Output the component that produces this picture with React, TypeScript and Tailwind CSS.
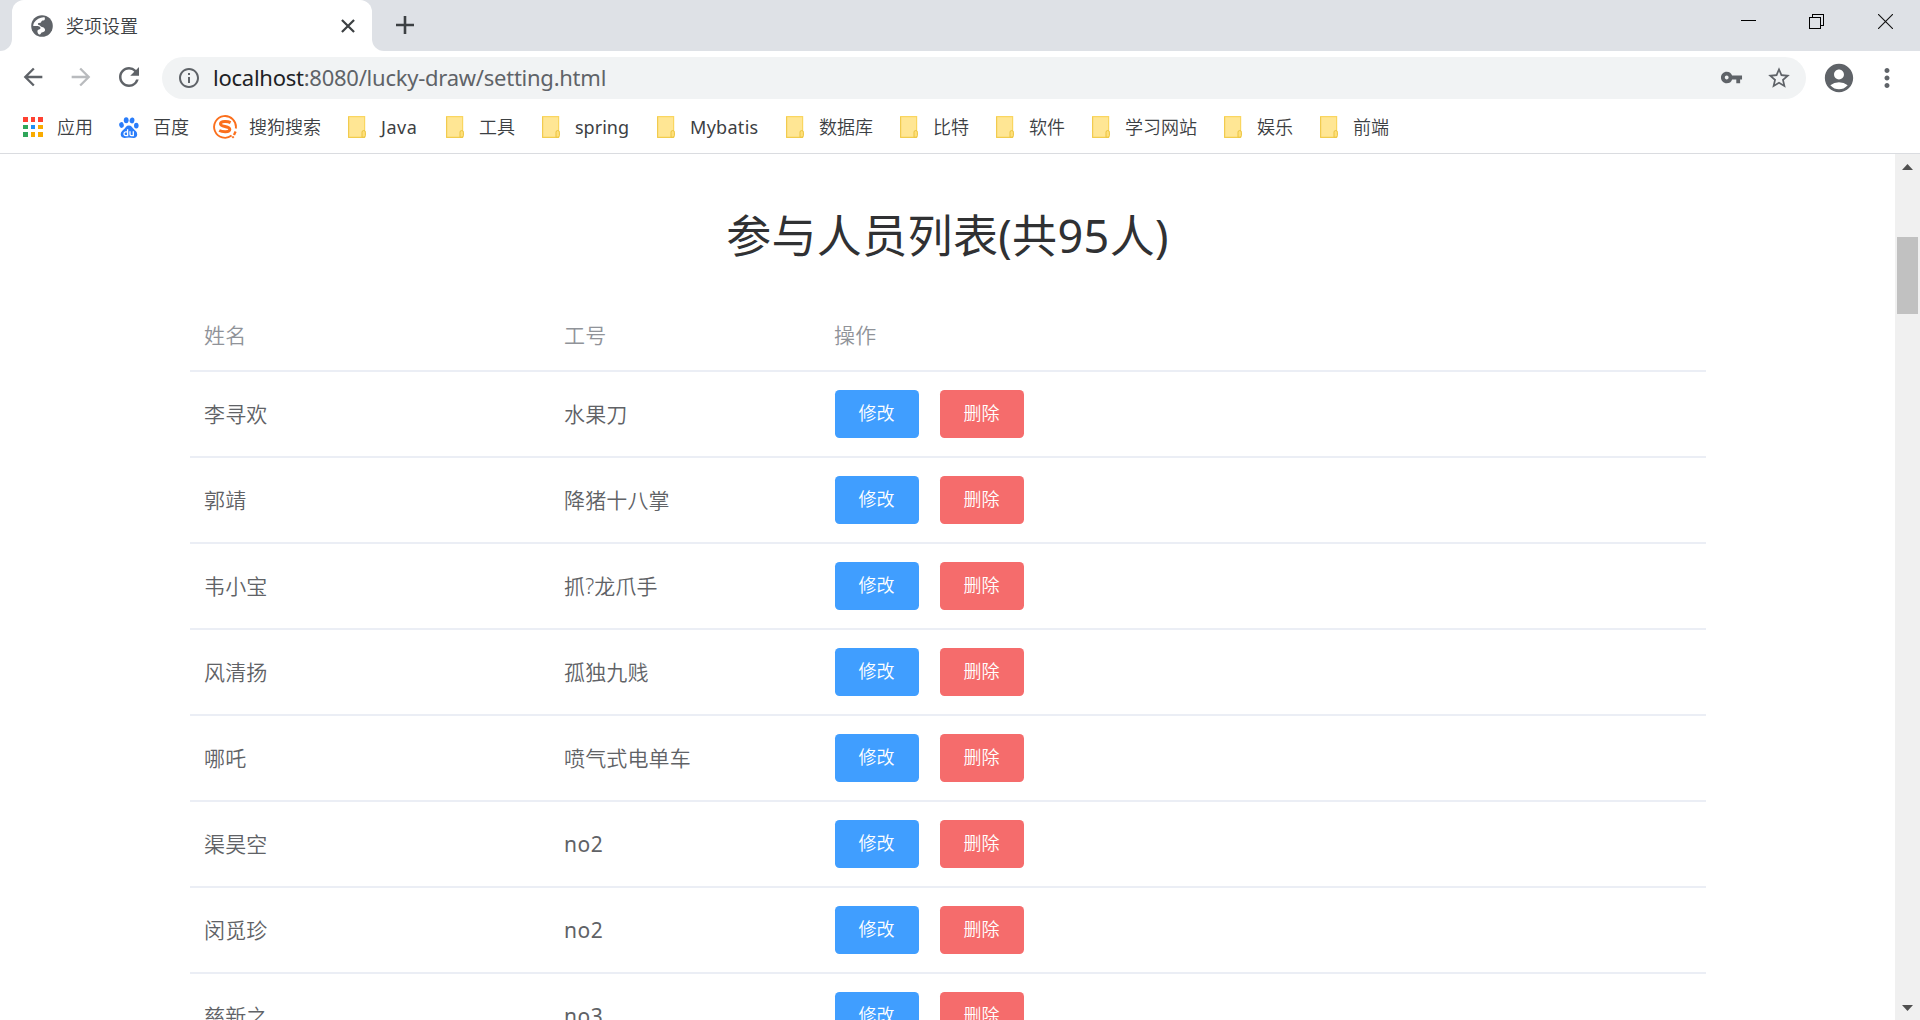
import type { ReactNode } from "react";
import { MdArrowBack, MdArrowForward, MdRefresh, MdInfoOutline, MdVpnKey, MdStarBorder, MdAccountCircle, MdMoreVert } from "react-icons/md";

const people: [string, string][] = [
  ["李寻欢", "水果刀"],
  ["郭靖", "降猪十八掌"],
  ["韦小宝", "抓?龙爪手"],
  ["风清扬", "孤独九贱"],
  ["哪吒", "喷气式电单车"],
  ["渠昊空", "no2"],
  ["闵觅珍", "no2"],
  ["慈新之", "no3"],
];

function Globe() {
  return (
    <svg viewBox="0 0 22 22" className="h-[22px] w-[22px] shrink-0">
      <circle cx="11" cy="11" r="10.8" fill="#5f6368" />
      <path
        d="M13.600 2.200C9.600 1.800 5.400 4 3 7.800c-.5 1-.8 2-.8 3.200h3.400c1.800 0 3.800.5 3.900 2 .1 1.300-1.500 1.200-2.500 1.900-.9.600-.5 2-.2 3.200.2.700.6 1.100 1.200 1.300 1.100 0 1.800-.2 2-1.200.3-1.200 2.900-.8 3.800-2.200.8-1.300-.2-2.700-1.200-3.400-.8-.6-2.300-.5-2.900-1.300-.5-.7-.9-1.300-1.900-1.400-.9-.1-1.300-.9-.6-1.600.6-.6 1.500-.2 2.300-.5.800-.3.600-1.300 1.300-1.900.8-.7 2.400-.2 2.900-1.200.3-.7.300-1.800-.1-2.500Z"
        fill="#fff"
      />
    </svg>
  );
}

function AppsIcon() {
  return (
    <svg viewBox="0 0 20 20" className="h-5 w-5">
      <path d="M0 0h5v5H0zM8 0h4v5H8zM15 0h5v5h-5z" fill="#ff4131" />
      <path d="M0 8h5v4H0zM0 15h5v5H0z" fill="#2fa65a" />
      <path d="M8 8h4v4H8z" fill="#1e8ff5" />
      <path d="M15 8h5v4h-5zM8 15h4v5H8zM15 15h5v5h-5z" fill="#f9ab00" />
    </svg>
  );
}

function BaiduIcon() {
  return (
    <svg viewBox="0 0 20 21" className="h-[21px] w-5">
      <g fill="#2a7dfa">
        <ellipse cx="2.500" cy="8" rx="2.300" ry="2.900" transform="rotate(-12 2.500 8)" />
        <ellipse cx="7.200" cy="3.200" rx="2.400" ry="3" />
        <ellipse cx="13" cy="3.400" rx="2.400" ry="3" transform="rotate(12 13 3.400)" />
        <ellipse cx="17.300" cy="8.600" rx="2.300" ry="2.900" />
        <path d="M9.900 8.400c2.600 0 3.400 2.200 4.800 3.700 1.500 1.600 3.500 2.700 3.500 5.300 0 2.400-1.700 3.600-3.700 3.500-1.700 0-2.900-.4-4.600-.4s-2.900.4-4.500.4c-2.100 0-3.700-1.300-3.700-3.600 0-2.600 2.100-3.600 3.500-5.200 1.300-1.500 2.100-3.700 4.700-3.700Z" />
      </g>
      <g fill="none" stroke="#fff" strokeWidth="1.300">
        <path d="M8.600 12.200v6.400H6.700q-1.700 0-1.700-1.900t1.700-1.900h1.900" />
        <path d="M11 14.200v3q0 1.400 1.300 1.400h2v-4.400" />
      </g>
    </svg>
  );
}

function SogouIcon() {
  return (
    <svg viewBox="0 0 24 24" className="h-6 w-6" fill="none" stroke="#fb6f1c">
      <path d="M18.600 20.600A10.900 10.900 0 1 1 22.800 13.500" strokeWidth="1.900" />
      <path d="M17.600 7.600c-2.600-1.300-9.800-1.900-10.100 1.200-.3 3.200 9.500 2.200 9.300 5.600-.2 3.300-7.500 2.700-10.600 1.100" strokeWidth="3" />
      <path d="M22.600 16.600 21 20" strokeWidth="2.300" />
      <circle cx="20" cy="22.200" r=".9" fill="#fb6f1c" strokeWidth=".4" />
    </svg>
  );
}

function FolderIcon() {
  return (
    <svg viewBox="0 0 18 22" className="h-[22px] w-[18px]">
      <path d="M.6.600h16v20.800H.6z" fill="#ffe694" stroke="#fad660" strokeWidth="1.200" />
      <path d="M.6 1v20.400h16" fill="none" stroke="#f0cb4e" strokeWidth="1" />
      <path d="M14 21.200v-5q0-1.700 1.700-1.700t1.700 1.700v3.400q0 1.600-1.600 1.600Z" fill="#ffe07a" stroke="#ebc440" strokeWidth="1" />
    </svg>
  );
}

type BookmarkProps = { label: string; width: string; icon?: ReactNode; iconBox?: string; labelClass?: string };

function Bookmark({ label, width, icon = <FolderIcon />, iconBox = "w-[33px]", labelClass = "" }: BookmarkProps) {
  return (
    <div className={`flex h-full shrink-0 items-center ${width}`}>
      <span className={`flex shrink-0 pb-px ${iconBox}`}>{icon}</span>
      <span className={`whitespace-nowrap ${labelClass}`}>{label}</span>
    </div>
  );
}

function TabStrip() {
  return (
    <div className="flex h-[51px] bg-[#dee1e6]">
      <div className="flex w-3 items-end bg-white">
        <div className="h-full w-full rounded-br-[12px] bg-[#dee1e6]" />
      </div>
      <div className="w-[360px] bg-[#dee1e6]">
        <div className="flex h-full items-center rounded-t-[12px] bg-white pl-[19px] pr-4">
          <Globe />
          <span className="ml-[13px] pt-[2px] text-[18px] text-[#3c4043]">奖项设置</span>
          <svg viewBox="0 0 12 12" className="ml-auto mr-px h-[14px] w-[14px]" stroke="#3c4043" strokeWidth="1.900">
            <path d="m.8.800 10.400 10.400M11.200.8.800 11.200" />
          </svg>
        </div>
      </div>
      <div className="w-3 bg-white">
        <div className="h-full rounded-bl-[12px] bg-[#dee1e6]" />
      </div>
      <svg viewBox="0 0 18 18" className="ml-3 mt-4 h-[18px] w-[18px]" stroke="#3c4043" strokeWidth="2.600">
        <path d="M9 0v18M0 9h18" />
      </svg>
      <div className="ml-auto flex pr-[27px] pt-[14px]">
        <svg viewBox="0 0 15 15" className="mr-[53px] h-[15px] w-[15px]" shapeRendering="crispEdges">
          <path d="M0 6h15v1H0z" fill="#000" />
        </svg>
        <svg viewBox="0 0 15 15" className="mr-[54px] h-[15px] w-[15px]" fill="none" stroke="#000" shapeRendering="crispEdges">
          <path d="M.5 3.500h11v11H.5zM3.500 3.500v-3h11v11h-3" />
        </svg>
        <svg viewBox="0 0 15 15" className="h-[15px] w-[15px]" stroke="#111" strokeWidth="1.100">
          <path d="m0 0 15 15M15 0 0 15" />
        </svg>
      </div>
    </div>
  );
}

function Toolbar() {
  return (
    <div className="flex h-[54px] items-center bg-white pl-[19px] text-[#5f6368]">
      <MdArrowBack className="mb-[2px] h-7 w-7" />
      <MdArrowForward className="mb-[2px] ml-[20px] h-7 w-7 text-[#b9bbbe]" />
      <MdRefresh className="mb-[2px] ml-[19px] h-[30px] w-[30px]" />
      <div className="ml-[18px] flex h-[42px] w-[1644px] items-center rounded-full bg-[#f1f3f4] pl-[15px]">
        <MdInfoOutline className="h-6 w-6" />
        <span className="ml-3 whitespace-nowrap pb-[2px] text-[22px] font-normal tracking-[-0.25px]">
          <span className="text-[#202124]">localhost</span>:8080/lucky-draw/setting.html
        </span>
        <MdVpnKey className="mb-[2px] ml-auto h-[23px] w-[23px]" />
        <MdStarBorder className="ml-[23px] mr-[14px] h-[26px] w-[26px]" />
      </div>
      <MdAccountCircle className="mb-px ml-4 h-[34px] w-[34px]" />
      <MdMoreVert className="mb-px ml-4 h-[30px] w-[30px]" />
    </div>
  );
}

function BookmarksBar() {
  return (
    <div className="flex h-12 items-center bg-white pb-[3px] pl-[23px] text-[18px] text-[#3c4043]">
      <Bookmark label="应用" width="w-24" icon={<AppsIcon />} iconBox="w-[34px]" />
      <Bookmark label="百度" width="w-[94px]" icon={<BaiduIcon />} iconBox="w-[34px]" />
      <Bookmark label="搜狗搜索" width="w-[135px]" icon={<SogouIcon />} iconBox="w-9" />
      <Bookmark label="Java" width="w-[98px]" labelClass="font-normal tracking-[0.5px]" />
      <Bookmark label="工具" width="w-24" />
      <Bookmark label="spring" width="w-[115px]" labelClass="font-normal" />
      <Bookmark label="Mybatis" width="w-[129px]" labelClass="font-normal tracking-[0.3px]" />
      <Bookmark label="数据库" width="w-[114px]" />
      <Bookmark label="比特" width="w-24" />
      <Bookmark label="软件" width="w-24" />
      <Bookmark label="学习网站" width="w-[132px]" />
      <Bookmark label="娱乐" width="w-24" />
      <Bookmark label="前端" width="w-24" />
    </div>
  );
}

function Scrollbar() {
  return (
    <div className="flex w-[25px] flex-col items-center bg-[#f0f0f0]">
      <svg viewBox="0 0 11 6" className="mt-[10px] h-[6px] w-[11px]">
        <path d="M5.500 0 11 6H0z" fill="#505050" />
      </svg>
      <div className="mt-[67px] h-[77px] w-[21px] bg-[#c1c1c1]" />
      <svg viewBox="0 0 11 6" className="mb-[9px] mt-auto h-[6px] w-[11px]">
        <path d="M0 0h11L5.500 6z" fill="#505050" />
      </svg>
    </div>
  );
}

function PeopleTable() {
  return (
    <div className="ml-[190px] w-[1516px] text-[21px] text-[#606266]">
      <div className="grid h-[74px] grid-cols-[360px_270px_1fr] items-center border-b-2 border-[#ebeef5] pl-[14px] pt-[3px] tracking-[0.25px] text-[#909399]">
        <span>姓名</span>
        <span>工号</span>
        <span>操作</span>
      </div>
      {people.map(([name, id]) => (
        <div key={name} className="grid h-[86px] grid-cols-[360px_270px_1fr] items-center border-b-2 border-[#ebeef5] pl-[14px]">
          <span className="pt-[2px] tracking-[0.15px]">{name}</span>
          <span className={id.startsWith("no") ? "pt-[2px] font-normal tracking-[0.5px]" : "pt-[2px] tracking-[0.15px]"}>{id}</span>
          <div className="flex gap-[21px] pl-px text-[18px] text-white">
            <button className="h-12 w-[84px] rounded-[4.500px] bg-[#409eff] pb-px pr-px">修改</button>
            <button className="h-12 w-[84px] rounded-[4.500px] bg-[#f56c6c] pb-px pr-px">删除</button>
          </div>
        </div>
      ))}
    </div>
  );
}

export default function App() {
  return (
    <div className="flex h-[1020px] w-[1920px] flex-col overflow-hidden bg-white font-['Noto_Sans','Noto_Sans_CJK_SC',sans-serif] font-[350]">
      <TabStrip />
      <Toolbar />
      <BookmarksBar />
      <div className="flex min-h-0 flex-1 border-t border-[#dadce0]">
        <main className="min-w-0 flex-1 overflow-hidden bg-white">
          <h1 className="mt-[48px] h-[96px] text-center text-[45px] font-normal leading-[68px] tracking-[0.35px] text-[#303133]">参与人员列表(共95人)</h1>
          <PeopleTable />
        </main>
        <Scrollbar />
      </div>
    </div>
  );
}
